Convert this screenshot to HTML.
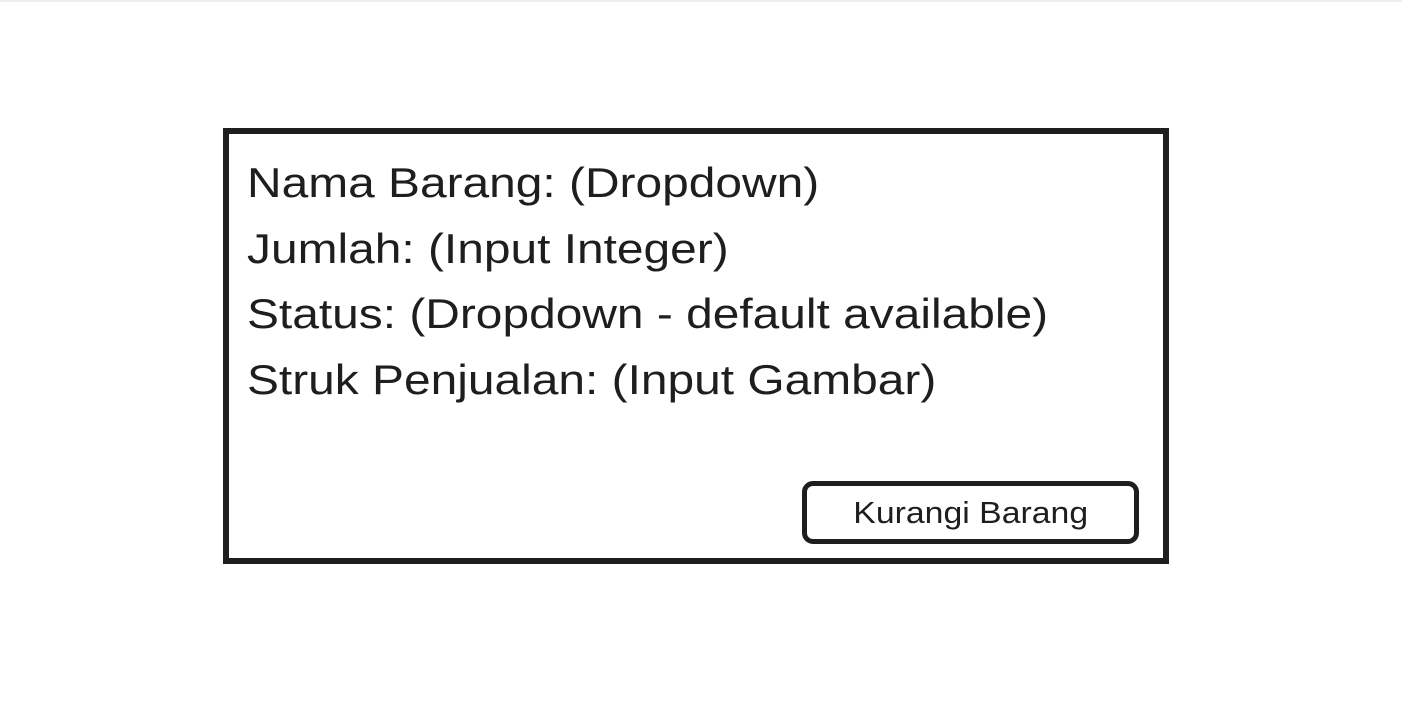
<!DOCTYPE html>
<html><head><style>
html,body{margin:0;padding:0;background:#fff;}
body{width:1402px;height:713px;position:relative;overflow:hidden;font-family:"Liberation Sans",sans-serif;color:#1e1e1e;border-top:2px solid #eee;box-sizing:border-box;}
.box{position:absolute;left:223px;top:126px;width:934px;height:424px;border:6px solid #1e1e1e;}
.t{position:absolute;left:247px;font-size:42px;white-space:nowrap;line-height:1;transform:scaleX(1.14);transform-origin:0 0;}
.btn{position:absolute;left:802px;top:479px;width:327px;height:53px;border:5px solid #1e1e1e;border-radius:11px;font-size:31px;text-align:center;line-height:53px;}
.btn span{display:inline-block;transform:scaleX(1.09);}
</style></head><body>
<div class="box"></div>
<div class="t" style="top:160px">Nama Barang: (Dropdown)</div>
<div class="t" style="top:226px">Jumlah: (Input Integer)</div>
<div class="t" style="top:291px">Status: (Dropdown - default available)</div>
<div class="t" style="top:357px">Struk Penjualan: (Input Gambar)</div>
<div class="btn"><span>Kurangi Barang</span></div>
</body></html>
